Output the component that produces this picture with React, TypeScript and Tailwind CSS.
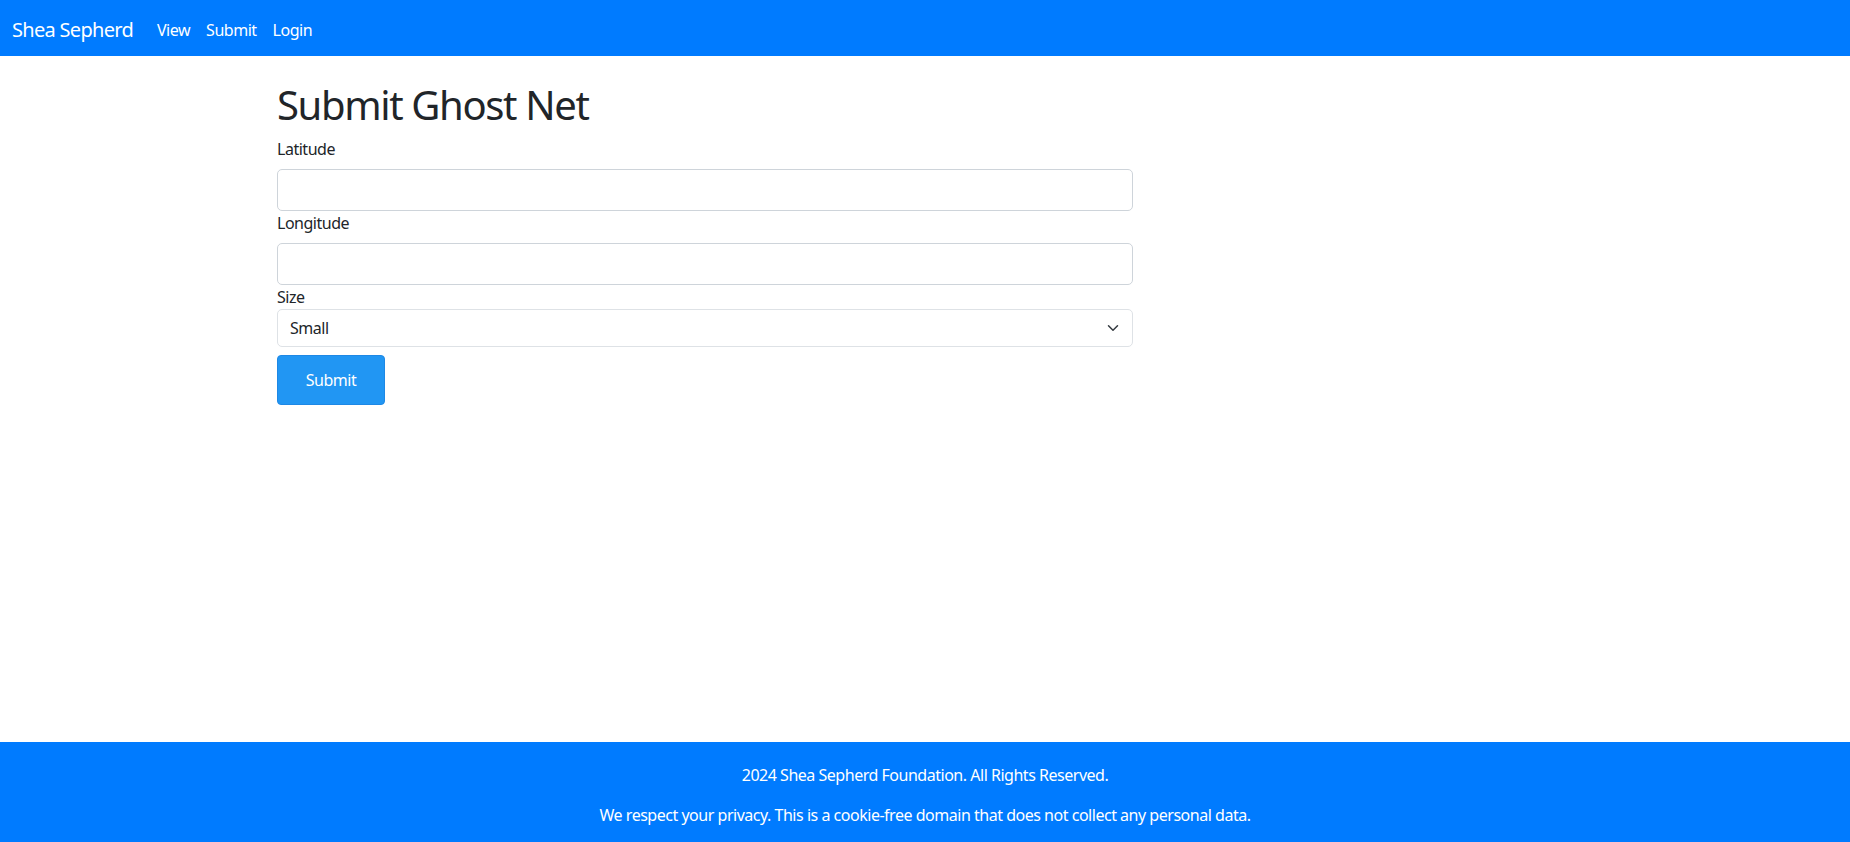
export default function App() {
  return (
    <div className="flex min-h-[842px] flex-col bg-white font-['Noto_Sans',sans-serif] tracking-[-0.03em] text-[#212529]">
      <nav className="flex h-[56px] items-center bg-[#007bff] px-3 pt-[4px] text-white">
        <a className="mr-6 text-[20px] tracking-[-0.035em]">Shea Sepherd</a>
        <div className="flex gap-4 text-[16px]">
          <a>View</a>
          <a>Submit</a>
          <a>Login</a>
        </div>
      </nav>

      <main className="flex-1 pl-[277px] pt-[25px]">
        <h1 className="mb-2 text-[40px] leading-[1.2] tracking-[-0.034em]">Submit Ghost Net</h1>
        <form className="flex w-[856px] flex-col">
          <label className="mb-2 text-[16px] leading-6">Latitude</label>
          <input
            type="text"
            className="h-[42px] rounded-[5px] border border-[#ced4da] px-3"
          />
          <label className="mb-2 text-[16px] leading-6">Longitude</label>
          <input
            type="text"
            className="h-[42px] rounded-[5px] border border-[#ced4da] px-3"
          />
          <label className="text-[16px] leading-6">Size</label>
          <div className="relative">
            <select className="h-[38px] w-full appearance-none rounded-[5px] border border-[#dee2e6] bg-white pl-3 text-[16px] tracking-[-0.03em] text-[#212529]">
              <option>Small</option>
              <option>Medium</option>
              <option>Large</option>
            </select>
            <svg
              className="pointer-events-none absolute right-[14px] top-[13px]"
              width="12"
              height="12"
              viewBox="0 0 16 16"
              fill="none"
              stroke="#343a40"
              strokeWidth="2"
              strokeLinecap="round"
              strokeLinejoin="round"
            >
              <path d="m2 5 6 6 6-6" />
            </svg>
          </div>
          <div className="mt-2">
            <button
              type="button"
              className="h-[50px] w-[108px] rounded-[4px] border border-[#1e88e5] bg-[#2196f3] text-[16px] tracking-[-0.03em] text-white"
            >
              Submit
            </button>
          </div>
        </form>
      </main>

      <footer className="h-[100px] bg-[#007bff] text-[16px] text-white">
        <div className="pt-[21px] text-center leading-6">
          <p>2024 Shea Sepherd Foundation. All Rights Reserved.</p>
          <p className="mt-4">
            We respect your privacy. This is a cookie-free domain that does not collect any personal data.
          </p>
        </div>
      </footer>
    </div>
  );
}
